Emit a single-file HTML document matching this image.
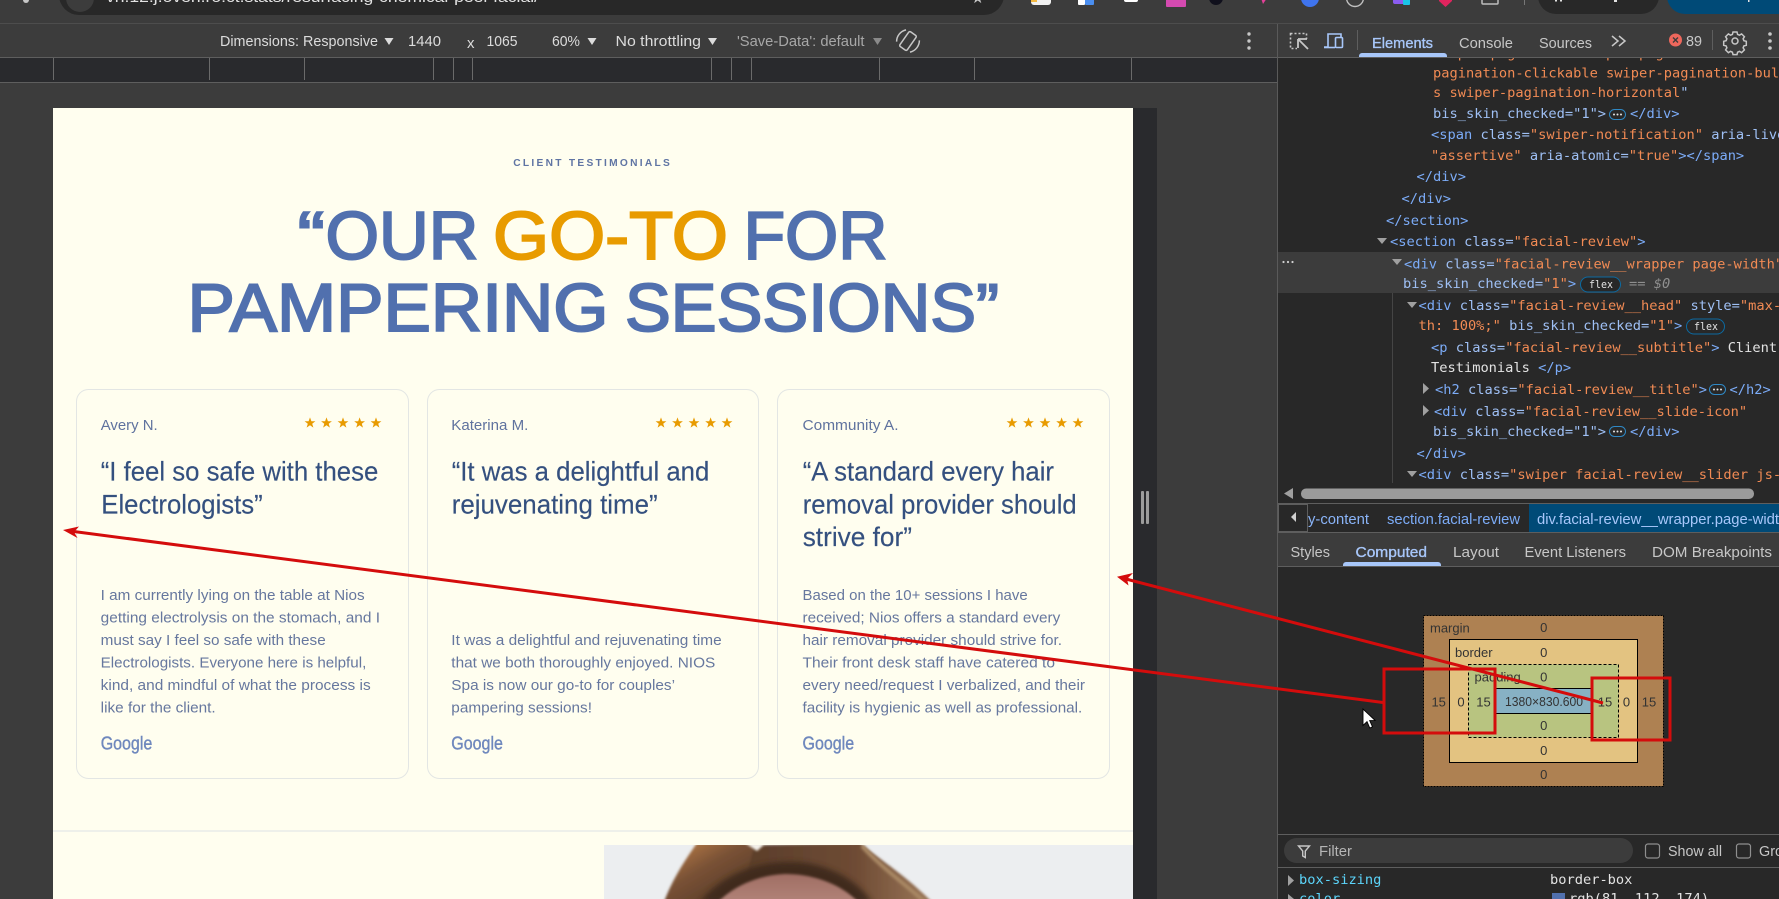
<!DOCTYPE html>
<html lang="en"><head><meta charset="utf-8"><title>Client Testimonials in DevTools</title>
<style>
html,body{margin:0;padding:0;background:#3c3c3c;overflow:hidden}
svg{display:block}
text{white-space:pre}
.s{font-family:"Liberation Sans",sans-serif}
.m{font-family:"DejaVu Sans Mono","Liberation Mono",monospace;font-size:13.7px}
.tb{font-family:"Liberation Sans",sans-serif;font-size:15px;fill:#dcdcdc}
.tab{font-family:"Liberation Sans",sans-serif;font-size:15px;fill:#c7c7c7}
.h{font-family:"Liberation Sans",sans-serif;font-size:68px;stroke-width:2px}
.name{font-family:"Liberation Sans",sans-serif;font-size:15px;fill:#5f729e}
.ti{font-family:"Liberation Sans",sans-serif;font-size:27px;fill:#34507f;stroke:#34507f;stroke-width:.15px}
.b{font-family:"Liberation Sans",sans-serif;font-size:15px;fill:#66779e}
.g{font-family:"Liberation Sans",sans-serif;font-size:18px;fill:#6f88bd;stroke:#6f88bd;stroke-width:.4px}
.bx{font-family:"Liberation Sans",sans-serif;font-size:13px;fill:#333}
.t{fill:#7cacf8}.a{fill:#9fc0f5}.v{fill:#f28b54}.w{fill:#e3e3e3}
</style></head><body>
<svg width="1779" height="899" viewBox="0 0 1779 899" xmlns="http://www.w3.org/2000/svg">
<defs>
<polygon id="st" points="0,-5.600 1.400,-1.800 5.400,-1.800 2.200,0.700 3.400,4.600 0,2.300 -3.400,4.600 -2.200,0.700 -5.400,-1.800 -1.400,-1.800" fill="#e89b00"/>
<g id="stars"><use href="#st" x="0"/><use href="#st" x="16.5"/><use href="#st" x="33"/><use href="#st" x="49.6"/><use href="#st" x="66"/></g>
<linearGradient id="hairL" x1="0" y1="0" x2="1" y2="1"><stop offset="0" stop-color="#c58449"/><stop offset=".4" stop-color="#7a5236"/><stop offset="1" stop-color="#46301f"/></linearGradient>
<linearGradient id="hairR" x1="0" y1="0" x2="1" y2="0"><stop offset="0" stop-color="#5a3d2a"/><stop offset=".6" stop-color="#6e4b34"/><stop offset="1" stop-color="#9a7658"/></linearGradient>
<linearGradient id="skin" x1="0" y1="0" x2="0" y2="1"><stop offset="0" stop-color="#a06e64"/><stop offset="1" stop-color="#b18378"/></linearGradient>
<filter id="bl" x="-10%" y="-10%" width="120%" height="120%"><feGaussianBlur stdDeviation="1.2"/></filter>
<filter id="bl2" x="-20%" y="-20%" width="140%" height="140%"><feGaussianBlur stdDeviation="3"/></filter>
<clipPath id="imgc"><rect x="604" y="845" width="529" height="54"/></clipPath>
<clipPath id="top"><rect x="0" y="0" width="1779" height="23"/></clipPath>
<clipPath id="domc"><rect x="1278" y="58" width="501" height="425"/></clipPath>
<clipPath id="bot"><rect x="1278" y="868" width="501" height="31"/></clipPath>
<g id="dots"><rect x="0.500" y="0.500" width="16" height="10" rx="5" fill="#282828" stroke="#2f88c4"/><circle cx="5" cy="5.500" r="1" fill="#e3e3e3"/><circle cx="8.500" cy="5.500" r="1" fill="#e3e3e3"/><circle cx="12" cy="5.500" r="1" fill="#e3e3e3"/></g>
</defs>

<!-- base -->
<rect width="1779" height="899" fill="#3c3c3c"/>

<!-- browser top strip -->
<g clip-path="url(#top)">
<rect x="59" y="-30" width="945" height="45" rx="20" fill="#282828"/>
<circle cx="80" cy="-2" r="14" fill="#3c3c3c"/>
<circle cx="26" cy="0" r="3" fill="#c7c7c7"/>
<text class="s" x="106" y="2" font-size="15" fill="#e3e3e3" textLength="433" lengthAdjust="spacingAndGlyphs">vn.12.j.oven.ro.ct.stats/resurfacing-chemical-peel-facial/</text>
<text class="s" x="971" y="3" font-size="15" fill="#c7c7c7">★</text>
<rect x="1031" y="-6" width="20" height="11" rx="3" fill="#f1f1f1"/><rect x="1031" y="-6" width="6" height="8" fill="#f4b942"/>
<rect x="1078" y="-6" width="7" height="11" rx="1" fill="#fff"/><rect x="1085" y="-6" width="9" height="11" rx="1" fill="#4a8ef0"/>
<rect x="1124" y="-6" width="14" height="8" rx="2" fill="#fff"/>
<rect x="1166" y="-6" width="20" height="13" rx="1" fill="#d44ab0"/>
<circle cx="1216" cy="-2" r="7" fill="#10101c"/>
<path d="M1261 -2l6 0-4 6z" fill="#e5409a"/>
<circle cx="1310" cy="-2" r="9" fill="#3f74ee"/>
<circle cx="1355" cy="-2" r="8.500" fill="none" stroke="#c0c0c0" stroke-width="1.400"/>
<rect x="1393" y="-6" width="12" height="10" rx="2" fill="#8a5cf0"/><rect x="1403" y="-2" width="7" height="7" rx="1" fill="#1ac4e8"/>
<path d="M1439 -2h13v3l-6.500 6-6.500-6z" fill="#e0245e"/>
<rect x="1482" y="-6" width="16" height="10" rx="1" fill="none" stroke="#bdbdbd" stroke-width="1.500"/>
<rect x="1524" y="-3" width="1" height="8" fill="#777"/>
<rect x="1538" y="-30" width="121" height="44" rx="18" fill="#282828"/>
<rect x="1555" y="0" width="2" height="1.500" fill="#e3e3e3"/><rect x="1560" y="0" width="2" height="1.500" fill="#e3e3e3"/><rect x="1614" y="0" width="3" height="2" fill="#e3e3e3"/>
<rect x="1667" y="-30" width="140" height="44" rx="18" fill="#004a77"/>
<rect x="1748" y="0" width="1.500" height="2" fill="#e3e3e3"/>
</g>
<rect x="0" y="23" width="1779" height="1" fill="#4d4d4d"/>

<!-- device toolbar -->
<rect x="0" y="24" width="1277" height="33" fill="#3c3c3c"/>
<text class="tb" x="220" y="46" textLength="158" lengthAdjust="spacingAndGlyphs">Dimensions: Responsive</text>
<path d="M384.500 38h9l-4.500 7z" fill="#dcdcdc"/>
<text class="tb" x="408" y="46" textLength="33" lengthAdjust="spacingAndGlyphs">1440</text>
<text class="tb" x="467" y="48" font-size="14" fill="#c7c7c7">x</text>
<text class="tb" x="486.500" y="46" textLength="31" lengthAdjust="spacingAndGlyphs">1065</text>
<text class="tb" x="552" y="46" textLength="28" lengthAdjust="spacingAndGlyphs">60%</text>
<path d="M587.500 38h9l-4.500 7z" fill="#dcdcdc"/>
<text class="tb" x="615.500" y="46" textLength="85.500" lengthAdjust="spacingAndGlyphs">No throttling</text>
<path d="M708 38h9l-4.500 7z" fill="#dcdcdc"/>
<text class="tb" x="737" y="46" textLength="127.500" lengthAdjust="spacingAndGlyphs" style="fill:#a8a8a8">'Save-Data': default</text>
<path d="M873 38h9l-4.500 7z" fill="#8a8a8a"/>
<g transform="translate(908 41) rotate(35)" fill="none" stroke="#c7c7c7" stroke-width="1.500">
<rect x="-4.500" y="-9" width="9" height="18" rx="1.500"/>
<path d="M-8 -8a12 12 0 0 0 -1 15M8 8a12 12 0 0 0 1 -15"/>
</g>
<circle cx="1249" cy="34" r="1.700" fill="#c7c7c7"/><circle cx="1249" cy="41" r="1.700" fill="#c7c7c7"/><circle cx="1249" cy="48" r="1.700" fill="#c7c7c7"/>
<rect x="0" y="57" width="1277" height="1" fill="#5e5e5e"/>

<!-- ruler -->
<rect x="0" y="58" width="1277" height="24" fill="#292a2d"/>
<rect x="0" y="82" width="1277" height="1" fill="#5e5e5e"/>
<g fill="#6a6a6a">
<rect x="53" y="58" width="1" height="22"/><rect x="209" y="58" width="1" height="22"/><rect x="304" y="58" width="1" height="22"/><rect x="433" y="58" width="1" height="22"/><rect x="453" y="58" width="1" height="22"/><rect x="472" y="58" width="1" height="22"/><rect x="711" y="58" width="1" height="22"/><rect x="731" y="58" width="1" height="22"/><rect x="751" y="58" width="1" height="22"/><rect x="879" y="58" width="1" height="22"/><rect x="974" y="58" width="1" height="22"/><rect x="1131" y="58" width="1" height="22"/>
</g>

<!-- dark band + resizer -->
<rect x="1133" y="108" width="24" height="791" fill="#292a2d"/>
<rect x="1141" y="491" width="3" height="33" rx="1" fill="#9c9c9c"/><rect x="1146" y="491" width="3" height="33" rx="1" fill="#9c9c9c"/>

<!-- page -->
<rect x="53" y="108" width="1080" height="791" fill="#fffeef"/>
<text class="s" x="513.300" y="166" font-size="10.200" font-weight="bold" fill="#5f74a3" textLength="156.500" lengthAdjust="spacing">CLIENT TESTIMONIALS</text>

<text class="h" x="297.500" y="259" fill="#5170ae" stroke="#5170ae" textLength="27.500" lengthAdjust="spacingAndGlyphs">“</text>
<text class="h" x="325.500" y="259" fill="#5170ae" stroke="#5170ae" textLength="153" lengthAdjust="spacingAndGlyphs">OUR</text>
<text class="h" x="493" y="259" fill="#e89b00" stroke="#e89b00" textLength="235" lengthAdjust="spacingAndGlyphs">GO-TO</text>
<text class="h" x="743.500" y="259" fill="#5170ae" stroke="#5170ae" textLength="144" lengthAdjust="spacingAndGlyphs">FOR</text>
<text class="h" x="187.500" y="331" fill="#5170ae" stroke="#5170ae" textLength="421" lengthAdjust="spacingAndGlyphs">PAMPERING</text>
<text class="h" x="625" y="331" fill="#5170ae" stroke="#5170ae" textLength="374" lengthAdjust="spacingAndGlyphs">SESSIONS”</text>

<!-- cards -->
<rect x="76.500" y="389.500" width="332" height="389" rx="12" fill="none" stroke="#e3e6e4"/>
<rect x="427.500" y="389.500" width="331" height="389" rx="12" fill="none" stroke="#e3e6e4"/>
<rect x="777.500" y="389.500" width="332" height="389" rx="12" fill="none" stroke="#e3e6e4"/>

<text class="name" x="100.700" y="430" textLength="57" lengthAdjust="spacingAndGlyphs">Avery N.</text>
<use href="#stars" x="310" y="423"/>
<text class="ti" x="100.700" y="480.700" textLength="277.600" lengthAdjust="spacingAndGlyphs">“I feel so safe with these</text>
<text class="ti" x="101.300" y="513.300" textLength="161.400" lengthAdjust="spacingAndGlyphs">Electrologists”</text>
<text class="b" x="100.700" y="600" textLength="264" lengthAdjust="spacingAndGlyphs">I am currently lying on the table at Nios</text>
<text class="b" x="100.700" y="622.400" textLength="279.300" lengthAdjust="spacingAndGlyphs">getting electrolysis on the stomach, and I</text>
<text class="b" x="100.700" y="645" textLength="225" lengthAdjust="spacingAndGlyphs">must say I feel so safe with these</text>
<text class="b" x="100.700" y="667.400" textLength="265.600" lengthAdjust="spacingAndGlyphs">Electrologists. Everyone here is helpful,</text>
<text class="b" x="100.700" y="690" textLength="270" lengthAdjust="spacingAndGlyphs">kind, and mindful of what the process is</text>
<text class="b" x="100.700" y="712.400" textLength="115" lengthAdjust="spacingAndGlyphs">like for the client.</text>
<text class="g" x="100.700" y="749.300" textLength="51.600" lengthAdjust="spacingAndGlyphs">Google</text>

<text class="name" x="451.300" y="430" textLength="77" lengthAdjust="spacingAndGlyphs">Katerina M.</text>
<use href="#stars" x="661" y="423"/>
<text class="ti" x="451.700" y="480.700" textLength="257.600" lengthAdjust="spacingAndGlyphs">“It was a delightful and</text>
<text class="ti" x="451.700" y="513.300" textLength="206" lengthAdjust="spacingAndGlyphs">rejuvenating time”</text>
<text class="b" x="451.300" y="645" textLength="270.400" lengthAdjust="spacingAndGlyphs">It was a delightful and rejuvenating time</text>
<text class="b" x="451.300" y="667.400" textLength="264" lengthAdjust="spacingAndGlyphs">that we both thoroughly enjoyed. NIOS</text>
<text class="b" x="451.300" y="690" textLength="223.700" lengthAdjust="spacingAndGlyphs">Spa is now our go-to for couples’</text>
<text class="b" x="451.300" y="712.400" textLength="140.700" lengthAdjust="spacingAndGlyphs">pampering sessions!</text>
<text class="g" x="451.300" y="749.300" textLength="51.600" lengthAdjust="spacingAndGlyphs">Google</text>

<text class="name" x="802.500" y="430" textLength="96" lengthAdjust="spacingAndGlyphs">Community A.</text>
<use href="#stars" x="1012" y="423"/>
<text class="ti" x="802.700" y="480.700" textLength="251.300" lengthAdjust="spacingAndGlyphs">“A standard every hair</text>
<text class="ti" x="802.700" y="513.300" textLength="274" lengthAdjust="spacingAndGlyphs">removal provider should</text>
<text class="ti" x="802.700" y="546" textLength="109.300" lengthAdjust="spacingAndGlyphs">strive for”</text>
<text class="b" x="802.500" y="600" textLength="225.200" lengthAdjust="spacingAndGlyphs">Based on the 10+ sessions I have</text>
<text class="b" x="802.500" y="622.400" textLength="257.800" lengthAdjust="spacingAndGlyphs">received; Nios offers a standard every</text>
<text class="b" x="802.500" y="645" textLength="259.500" lengthAdjust="spacingAndGlyphs">hair removal provider should strive for.</text>
<text class="b" x="802.500" y="667.400" textLength="252.500" lengthAdjust="spacingAndGlyphs">Their front desk staff have catered to</text>
<text class="b" x="802.500" y="690" textLength="282.500" lengthAdjust="spacingAndGlyphs">every need/request I verbalized, and their</text>
<text class="b" x="802.500" y="712.400" textLength="279.800" lengthAdjust="spacingAndGlyphs">facility is hygienic as well as professional.</text>
<text class="g" x="802.500" y="749.300" textLength="51.600" lengthAdjust="spacingAndGlyphs">Google</text>

<!-- divider + photo -->
<rect x="53" y="830" width="1080" height="2" fill="#eef0ea"/>
<g clip-path="url(#imgc)">
<rect x="604" y="845" width="529" height="54" fill="#eceef0"/>
<g filter="url(#bl)">
<path d="M697 843 C685 860 672 880 664 902 L760 902 L764 843 Z" fill="url(#hairL)"/>
<path d="M755 843 L757 851 L762 845 L860 843 C880 860 905 875 932 902 L740 902 Z" fill="url(#hairR)"/>
</g>
<path d="M700 902 C722 875 755 862 790 862 C825 862 855 878 872 902 Z" fill="#3f2a1c" filter="url(#bl2)"/>
<path d="M862 846 C880 866 900 880 925 902" fill="none" stroke="#a88763" stroke-width="4" filter="url(#bl)"/>
<g filter="url(#bl)">
<path d="M718 902 C735 885 760 875 785 874 C815 874 842 885 858 902 Z" fill="url(#skin)"/>
<path d="M745 843l12 8 9-8z" fill="#f4f1ea"/>
</g>
</g>

<!-- devtools panel -->
<rect x="1277" y="58" width="502" height="841" fill="#282828"/>
<rect x="1277" y="24" width="1" height="875" fill="#5a5a5a"/>
<rect x="1278" y="24" width="501" height="33" fill="#3c3c3c"/>
<rect x="1278" y="57" width="501" height="1" fill="#5e5e5e"/>

<!-- tab bar icons -->
<g fill="none" stroke="#c7c7c7" stroke-width="1.600">
<rect x="1290.500" y="33.500" width="16" height="15" stroke-dasharray="2 2"/>
</g>
<rect x="1297" y="39" width="12" height="11" fill="#3c3c3c"/>
<path d="M1298 39h9M1298 39v9M1299 40l9 9" fill="none" stroke="#c7c7c7" stroke-width="1.800"/>
<g fill="none" stroke="#a8c7fa" stroke-width="1.600">
<path d="M1328 47h-4M1328 47V34h13v3"/><rect x="1335.500" y="37.500" width="7" height="10" rx="1"/>
<path d="M1324 47.500h11"/>
</g>
<rect x="1357" y="30" width="1" height="20" fill="#5e5e5e"/>
<text class="tab" x="1372" y="48" textLength="61" lengthAdjust="spacingAndGlyphs" style="fill:#a8c7fa;stroke:#a8c7fa;stroke-width:.35px">Elements</text>
<path d="M1359 57v-1a3 3 0 0 1 3-3h82a3 3 0 0 1 3 3v1z" fill="#a8c7fa"/>
<text class="tab" x="1459" y="48" textLength="54" lengthAdjust="spacingAndGlyphs">Console</text>
<text class="tab" x="1539" y="48" textLength="53" lengthAdjust="spacingAndGlyphs">Sources</text>
<path d="M1612 36l6 5-6 5M1619 36l6 5-6 5" fill="none" stroke="#c7c7c7" stroke-width="1.500"/>
<circle cx="1675.500" cy="40" r="6.500" fill="#ee675c"/>
<path d="M1673 37.500l5 5M1678 37.500l-5 5" stroke="#3c3c3c" stroke-width="1.400"/>
<text class="tab" x="1686" y="46" textLength="16" lengthAdjust="spacingAndGlyphs">89</text>
<rect x="1712" y="30" width="1" height="20" fill="#5e5e5e"/>
<g transform="translate(1735 41)">
<path d="M-2 -9h4l.6 2.400 1.900.8 2.100-1.300 2.800 2.800-1.300 2.100.8 1.900 2.400.6v4l-2.400.6-.8 1.900 1.300 2.100-2.800 2.800-2.100-1.300-1.900.8-.6 2.400h-4l-.6-2.400-1.900-.8-2.100 1.300-2.800-2.800 1.300-2.100-.8-1.900-2.400-.6v-4l2.400-.6.800-1.900-1.300-2.100 2.800-2.800 2.100 1.300 1.900-.8z" fill="none" stroke="#c7c7c7" stroke-width="1.500"/>
<circle r="3" fill="none" stroke="#c7c7c7" stroke-width="1.500"/>
</g>
<circle cx="1770" cy="34" r="1.800" fill="#c7c7c7"/><circle cx="1770" cy="41" r="1.800" fill="#c7c7c7"/><circle cx="1770" cy="48" r="1.800" fill="#c7c7c7"/>

<!-- DOM tree -->
<rect x="1278" y="252" width="501" height="41" fill="#3c3c3c"/>
<rect x="1392" y="293" width="1" height="190" fill="#454545"/>
<g clip-path="url(#domc)" class="m">
<text class="m v" x="1433" y="57.500">swiper-pagination swiper-pagination-bullets</text>
<text class="m v" x="1433" y="77.500">pagination-clickable swiper-pagination-bullet</text>
<text class="m v" x="1433" y="97">s swiper-pagination-horizontal<tspan class="a">"</tspan></text>
<text class="m a" x="1433" y="118">bis_skin_checked="1"&gt;</text>
<use href="#dots" x="1609" y="109"/>
<text class="m t" x="1630" y="118">&lt;/div&gt;</text>
<text class="m" x="1431" y="139"><tspan class="t">&lt;span </tspan><tspan class="a">class=</tspan><tspan class="v">"swiper-notification"</tspan><tspan class="a"> aria-live=</tspan></text>
<text class="m" x="1431" y="160"><tspan class="v">"assertive"</tspan><tspan class="a"> aria-atomic=</tspan><tspan class="v">"true"</tspan><tspan class="t">&gt;&lt;/span&gt;</tspan></text>
<text class="m t" x="1416.500" y="181">&lt;/div&gt;</text>
<text class="m t" x="1401.500" y="203">&lt;/div&gt;</text>
<text class="m t" x="1386" y="225">&lt;/section&gt;</text>
<path d="M1377 238h10l-5 6z" fill="#a0a0a0"/>
<text class="m" x="1390" y="246"><tspan class="t">&lt;section </tspan><tspan class="a">class=</tspan><tspan class="v">"facial-review"</tspan><tspan class="t">&gt;</tspan></text>
<circle cx="1283.500" cy="262" r="1.100" fill="#d0d0d0"/><circle cx="1288" cy="262" r="1.100" fill="#d0d0d0"/><circle cx="1292.500" cy="262" r="1.100" fill="#d0d0d0"/>
<path d="M1392 259h10l-5 6z" fill="#a0a0a0"/>
<text class="m" x="1404" y="268.500"><tspan class="t">&lt;div </tspan><tspan class="a">class=</tspan><tspan class="v">"facial-review__wrapper page-width"</tspan></text>
<text class="m" x="1403" y="288"><tspan class="a">bis_skin_checked=</tspan><tspan class="v">"1"</tspan><tspan class="t">&gt;</tspan></text>
<rect x="1580.500" y="277" width="40" height="15" rx="7.500" fill="#282828" stroke="#0b6aa2"/>
<text class="m w" x="1589" y="288" style="font-size:11px" textLength="24" lengthAdjust="spacingAndGlyphs">flex</text>
<text class="m" x="1629" y="288" style="fill:#8f8f8f">== <tspan font-style="italic">$0</tspan></text>
<path d="M1407 302h10l-5 6z" fill="#a0a0a0"/>
<text class="m" x="1418.500" y="310"><tspan class="t">&lt;div </tspan><tspan class="a">class=</tspan><tspan class="v">"facial-review__head"</tspan><tspan class="a"> style=</tspan><tspan class="v">"max-wid</tspan></text>
<text class="m" x="1418.500" y="330"><tspan class="v">th: 100%;"</tspan><tspan class="a"> bis_skin_checked=</tspan><tspan class="v">"1"</tspan><tspan class="t">&gt;</tspan></text>
<rect x="1686.500" y="319" width="38" height="15" rx="7.500" fill="#282828" stroke="#0b6aa2"/>
<text class="m w" x="1694" y="330" style="font-size:11px" textLength="24" lengthAdjust="spacingAndGlyphs">flex</text>
<text class="m" x="1431" y="352"><tspan class="t">&lt;p </tspan><tspan class="a">class=</tspan><tspan class="v">"facial-review__subtitle"</tspan><tspan class="t">&gt;</tspan><tspan class="w"> Client</tspan></text>
<text class="m" x="1431" y="372"><tspan class="w">Testimonials </tspan><tspan class="t">&lt;/p&gt;</tspan></text>
<path d="M1423 383v11l6-5.500z" fill="#a0a0a0"/>
<text class="m" x="1435" y="394"><tspan class="t">&lt;h2 </tspan><tspan class="a">class=</tspan><tspan class="v">"facial-review__title"</tspan><tspan class="t">&gt;</tspan></text>
<use href="#dots" x="1709" y="384"/>
<text class="m t" x="1729.500" y="394">&lt;/h2&gt;</text>
<path d="M1423 405v11l6-5.500z" fill="#a0a0a0"/>
<text class="m" x="1434" y="416"><tspan class="t">&lt;div </tspan><tspan class="a">class=</tspan><tspan class="v">"facial-review__slide-icon"</tspan></text>
<text class="m a" x="1433" y="436">bis_skin_checked="1"&gt;</text>
<use href="#dots" x="1609" y="426"/>
<text class="m t" x="1630" y="436">&lt;/div&gt;</text>
<text class="m t" x="1416.500" y="458">&lt;/div&gt;</text>
<path d="M1407 471h10l-5 6z" fill="#a0a0a0"/>
<text class="m" x="1418.500" y="479"><tspan class="t">&lt;div </tspan><tspan class="a">class=</tspan><tspan class="v">"swiper facial-review__slider js-</tspan></text>
</g>

<!-- scrollbar -->
<path d="M1293 488v11l-9-5.500z" fill="#a0a0a0"/>
<rect x="1301" y="488.500" width="453" height="10.500" rx="5" fill="#9b9b9b"/>

<!-- breadcrumbs -->
<rect x="1278" y="503" width="501" height="1" fill="#5e5e5e"/>
<rect x="1278" y="504" width="501" height="28" fill="#282828"/>
<rect x="1529" y="504" width="250" height="28" fill="#004a77"/>
<rect x="1278.500" y="504.500" width="29" height="27" fill="#282828" stroke="#5e5e5e"/>
<path d="M1296 514v10l-5-5z" fill="#d0d0d0" transform="translate(0 -2)"/>
<text class="tab" x="1308" y="524" textLength="61" lengthAdjust="spacingAndGlyphs" style="fill:#8ab4f8">y-content</text>
<text class="tab" x="1387" y="524" textLength="133" lengthAdjust="spacingAndGlyphs" style="fill:#7cacf8">section.facial-review</text>
<text class="tab" x="1537" y="524" textLength="242" lengthAdjust="spacingAndGlyphs" style="fill:#a8c7fa">div.facial-review__wrapper.page-widt</text>
<rect x="1278" y="532" width="501" height="1" fill="#5e5e5e"/>

<!-- lower tabs -->
<rect x="1278" y="533" width="501" height="33" fill="#3c3c3c"/>
<rect x="1278" y="566" width="501" height="1" fill="#5e5e5e"/>
<text class="tab" x="1290.500" y="557" textLength="39.500" lengthAdjust="spacingAndGlyphs">Styles</text>
<text class="tab" x="1355.500" y="557" textLength="71.500" lengthAdjust="spacingAndGlyphs" style="fill:#a8c7fa;stroke:#a8c7fa;stroke-width:.35px">Computed</text>
<path d="M1343 566v-1a3 3 0 0 1 3-3h92a3 3 0 0 1 3 3v1z" fill="#a8c7fa"/>
<text class="tab" x="1453" y="557" textLength="46" lengthAdjust="spacingAndGlyphs">Layout</text>
<text class="tab" x="1524.500" y="557" textLength="101.500" lengthAdjust="spacingAndGlyphs">Event Listeners</text>
<text class="tab" x="1652" y="557" textLength="120" lengthAdjust="spacingAndGlyphs">DOM Breakpoints</text>

<!-- box model -->
<rect x="1423.500" y="615.500" width="240" height="171" fill="#ae8152" stroke="#000" stroke-dasharray="2 1"/>
<rect x="1449.500" y="639.500" width="188" height="123" fill="#e3c381" stroke="#000"/>
<rect x="1468.500" y="664.500" width="150" height="73" fill="#b8c480" stroke="#000" stroke-dasharray="3 2"/>
<rect x="1495.500" y="688.500" width="97" height="25" fill="#87b1c4" stroke="#000"/>
<text class="bx" x="1430" y="632.500">margin</text><text class="bx" x="1543.700" y="632" text-anchor="middle">0</text>
<text class="bx" x="1455" y="657">border</text><text class="bx" x="1543.700" y="657" text-anchor="middle">0</text>
<text class="bx" x="1474.500" y="681.500">padding</text><text class="bx" x="1543.700" y="681.500" text-anchor="middle">0</text>
<text class="bx" x="1438.700" y="706.500" text-anchor="middle">15</text>
<text class="bx" x="1461" y="706.500" text-anchor="middle">0</text>
<text class="bx" x="1483.500" y="706.500" text-anchor="middle">15</text>
<text class="bx" x="1544" y="706" text-anchor="middle" textLength="78" lengthAdjust="spacingAndGlyphs">1380×830.600</text>
<text class="bx" x="1605" y="706.500" text-anchor="middle">15</text>
<text class="bx" x="1626.500" y="706.500" text-anchor="middle">0</text>
<text class="bx" x="1649" y="706.500" text-anchor="middle">15</text>
<text class="bx" x="1543.700" y="730" text-anchor="middle">0</text>
<text class="bx" x="1543.700" y="755" text-anchor="middle">0</text>
<text class="bx" x="1543.700" y="779" text-anchor="middle">0</text>

<!-- filter row -->
<rect x="1278" y="834" width="501" height="1" fill="#5e5e5e"/>
<rect x="1284" y="838" width="349" height="25" rx="12.500" fill="#3c3c3c"/>
<path d="M1298.500 846h11l-4.200 5v6.500l-2.600-1.500v-5z" fill="none" stroke="#c7c7c7" stroke-width="1.400"/>
<text class="tab" x="1319" y="856" textLength="33" lengthAdjust="spacingAndGlyphs" style="fill:#b5b5b5">Filter</text>
<rect x="1645.500" y="844" width="14" height="14" rx="2.500" fill="none" stroke="#8f8f8f" stroke-width="1.200"/>
<text class="tab" x="1668" y="856" textLength="54" lengthAdjust="spacingAndGlyphs">Show all</text>
<rect x="1736.500" y="844" width="14" height="14" rx="2.500" fill="none" stroke="#8f8f8f" stroke-width="1.200"/>
<text class="tab" x="1759" y="856" textLength="24" lengthAdjust="spacingAndGlyphs">Gro</text>
<rect x="1278" y="867" width="501" height="1" fill="#5e5e5e"/>

<g clip-path="url(#bot)">
<path d="M1288 875v11l6-5.500z" fill="#a0a0a0"/>
<text class="m" x="1299" y="884" style="fill:#5cd5fb">box-sizing</text>
<text class="m w" x="1550" y="884">border-box</text>
<path d="M1288 894v10l6-5z" fill="#a0a0a0"/>
<text class="m" x="1299" y="903" style="fill:#5cd5fb">color</text>
<rect x="1552" y="893" width="13" height="13" fill="#5170ae"/>
<text class="m w" x="1569" y="903">rgb(81, 112, 174)</text>
</g>

<!-- red annotations -->
<g fill="none" stroke="#d40c0c">
<rect x="1384" y="669" width="111" height="64" stroke-width="3"/>
<rect x="1592" y="678" width="78" height="62" stroke-width="3"/>
<line x1="1383" y1="702.500" x2="70" y2="531" stroke-width="3"/>
<line x1="1603" y1="703" x2="1124" y2="578.500" stroke-width="3"/>
</g>
<path d="M63 530L79 526.500L74 532L77.500 538Z" fill="#d40c0c"/>
<path d="M1117 576.700L1133 573L1127 579L1128.500 585.500Z" fill="#d40c0c"/>

<!-- cursor -->
<path d="M1363 709v16.500l4-3.800 2.800 6.300 2.700-1.200-2.800-6.200 5.400-.2z" fill="#fff" stroke="#000" stroke-width=".9"/>
</svg>
</body></html>
